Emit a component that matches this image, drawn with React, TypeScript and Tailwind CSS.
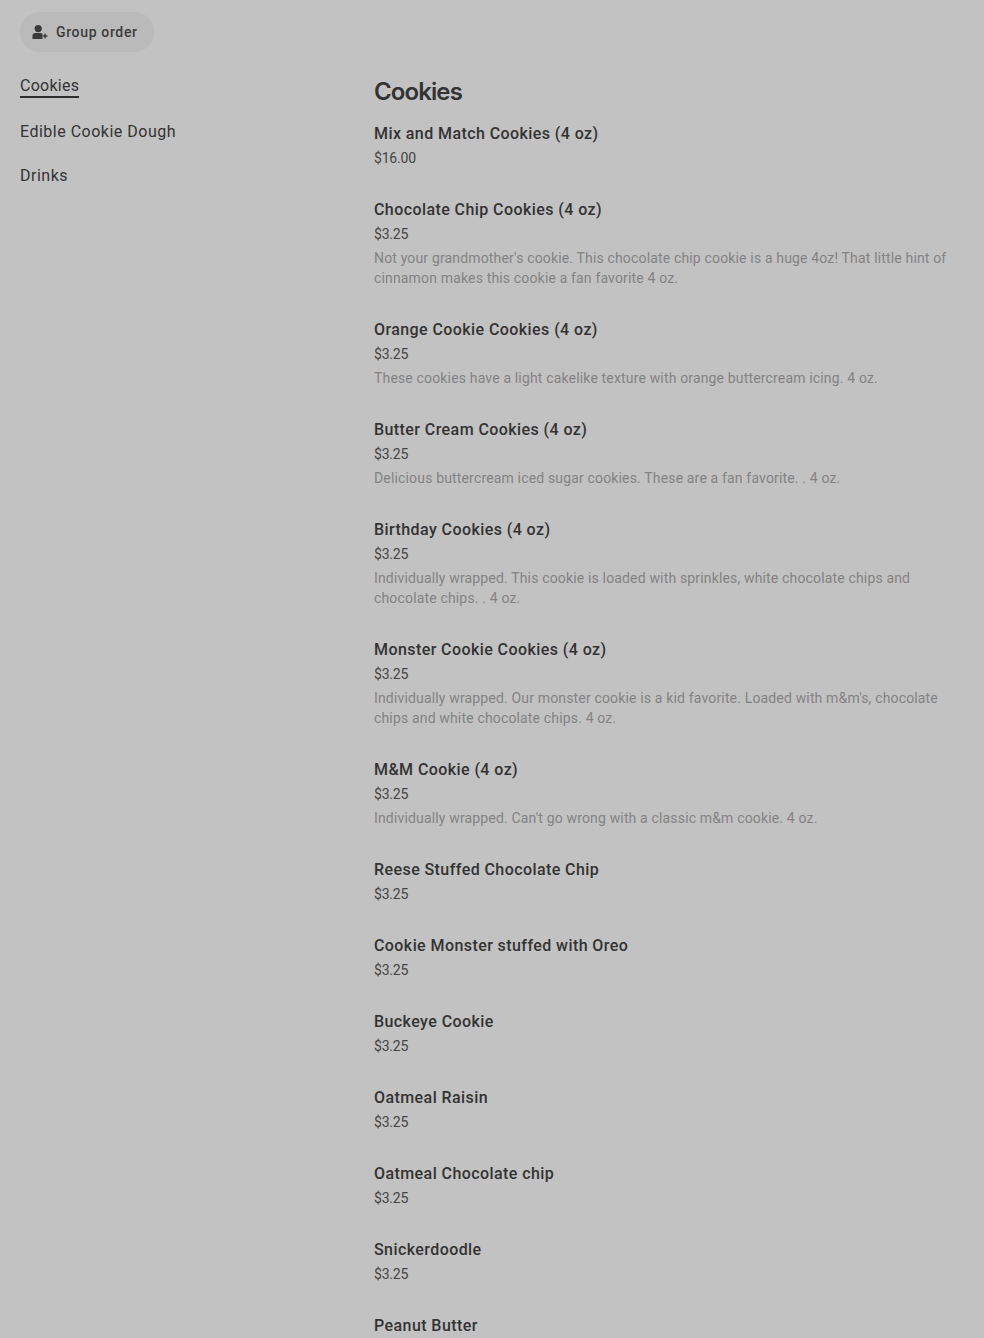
import React from 'react';

interface MenuItem {
  title: string;
  price: string;
  description?: string;
}

const items: MenuItem[] = [
  { title: 'Mix and Match Cookies (4 oz)', price: '$16.00' },
  {
    title: 'Chocolate Chip Cookies (4 oz)',
    price: '$3.25',
    description:
      "Not your grandmother's cookie. This chocolate chip cookie is a huge 4oz! That little hint of cinnamon makes this cookie a fan favorite 4 oz.",
  },
  {
    title: 'Orange Cookie Cookies (4 oz)',
    price: '$3.25',
    description: 'These cookies have a light cakelike texture with orange buttercream icing. 4 oz.',
  },
  {
    title: 'Butter Cream Cookies (4 oz)',
    price: '$3.25',
    description: 'Delicious buttercream iced sugar cookies. These are a fan favorite. . 4 oz.',
  },
  {
    title: 'Birthday Cookies (4 oz)',
    price: '$3.25',
    description:
      'Individually wrapped. This cookie is loaded with sprinkles, white chocolate chips and chocolate chips. . 4 oz.',
  },
  {
    title: 'Monster Cookie Cookies (4 oz)',
    price: '$3.25',
    description:
      "Individually wrapped. Our monster cookie is a kid favorite. Loaded with m&m's, chocolate chips and white chocolate chips. 4 oz.",
  },
  {
    title: 'M&M Cookie (4 oz)',
    price: '$3.25',
    description: "Individually wrapped. Can't go wrong with a classic m&m cookie. 4 oz.",
  },
  { title: 'Reese Stuffed Chocolate Chip', price: '$3.25' },
  { title: 'Cookie Monster stuffed with Oreo', price: '$3.25' },
  { title: 'Buckeye Cookie', price: '$3.25' },
  { title: 'Oatmeal Raisin', price: '$3.25' },
  { title: 'Oatmeal Chocolate chip', price: '$3.25' },
  { title: 'Snickerdoodle', price: '$3.25' },
  { title: 'Peanut Butter', price: '$3.25' },
];

function GroupIcon() {
  return (
    <svg width="16" height="16" viewBox="0 0 16 16" fill="currentColor" className="shrink-0">
      <circle cx="6.2" cy="4.6" r="3.6" />
      <path d="M0.5 15v-3.2A2.8 2.8 0 0 1 3.3 9h5.4c.7 0 1.3.3 1.8.7V15H0.5Z" />
      <path d="M12.3 9.6h1.4v1.7h1.8v1.4h-1.8v1.8h-1.4v-1.8h-1.6v-1.4h1.6V9.6Z" />
    </svg>
  );
}

export default function App() {
  return (
    <div className="h-[1338px] overflow-hidden bg-[#c2c2c2] font-['Roboto',sans-serif] text-[#2e2e2e]">
      <div className="px-5 pt-3">
        <button className="flex h-10 w-[134px] items-center gap-2 rounded-full bg-[#bababa] pl-3 text-sm font-medium text-[#3a3a3a] tracking-[0.65px]">
          <GroupIcon />
          Group order
        </button>
      </div>
      <div className="flex">
        <nav className="w-[374px] shrink-0 pl-5 pt-[22px] text-base tracking-[0.5px] text-[#333333]">
          <div className="w-fit border-b-2 border-[#2e2e2e] pt-px leading-[21px] tracking-[0.25px]">Cookies</div>
          <div className="mt-[22px] leading-6">Edible Cookie Dough</div>
          <div className="mt-5 leading-6">Drinks</div>
        </nav>
        <main className="flex-1 pr-9 pt-[21px]">
          <h2 className="font-['Inter',sans-serif] text-2xl leading-[38px] font-semibold tracking-[-0.9px] text-[#333333]">
            Cookies
          </h2>
          <div className="mt-[11px]">
            {items.map((item) => (
              <div key={item.title} className="pb-[30px]">
                <div className="text-base leading-6 font-[480] tracking-[0.42px] text-[#333333]">{item.title}</div>
                <div className="mt-[2px] text-sm leading-5 tracking-[-0.2px] text-[#444444]">{item.price}</div>
                {item.description && (
                  <div className="mt-1 text-sm leading-5 tracking-[0.16px] text-[#828282]">{item.description}</div>
                )}
              </div>
            ))}
          </div>
        </main>
      </div>
    </div>
  );
}
